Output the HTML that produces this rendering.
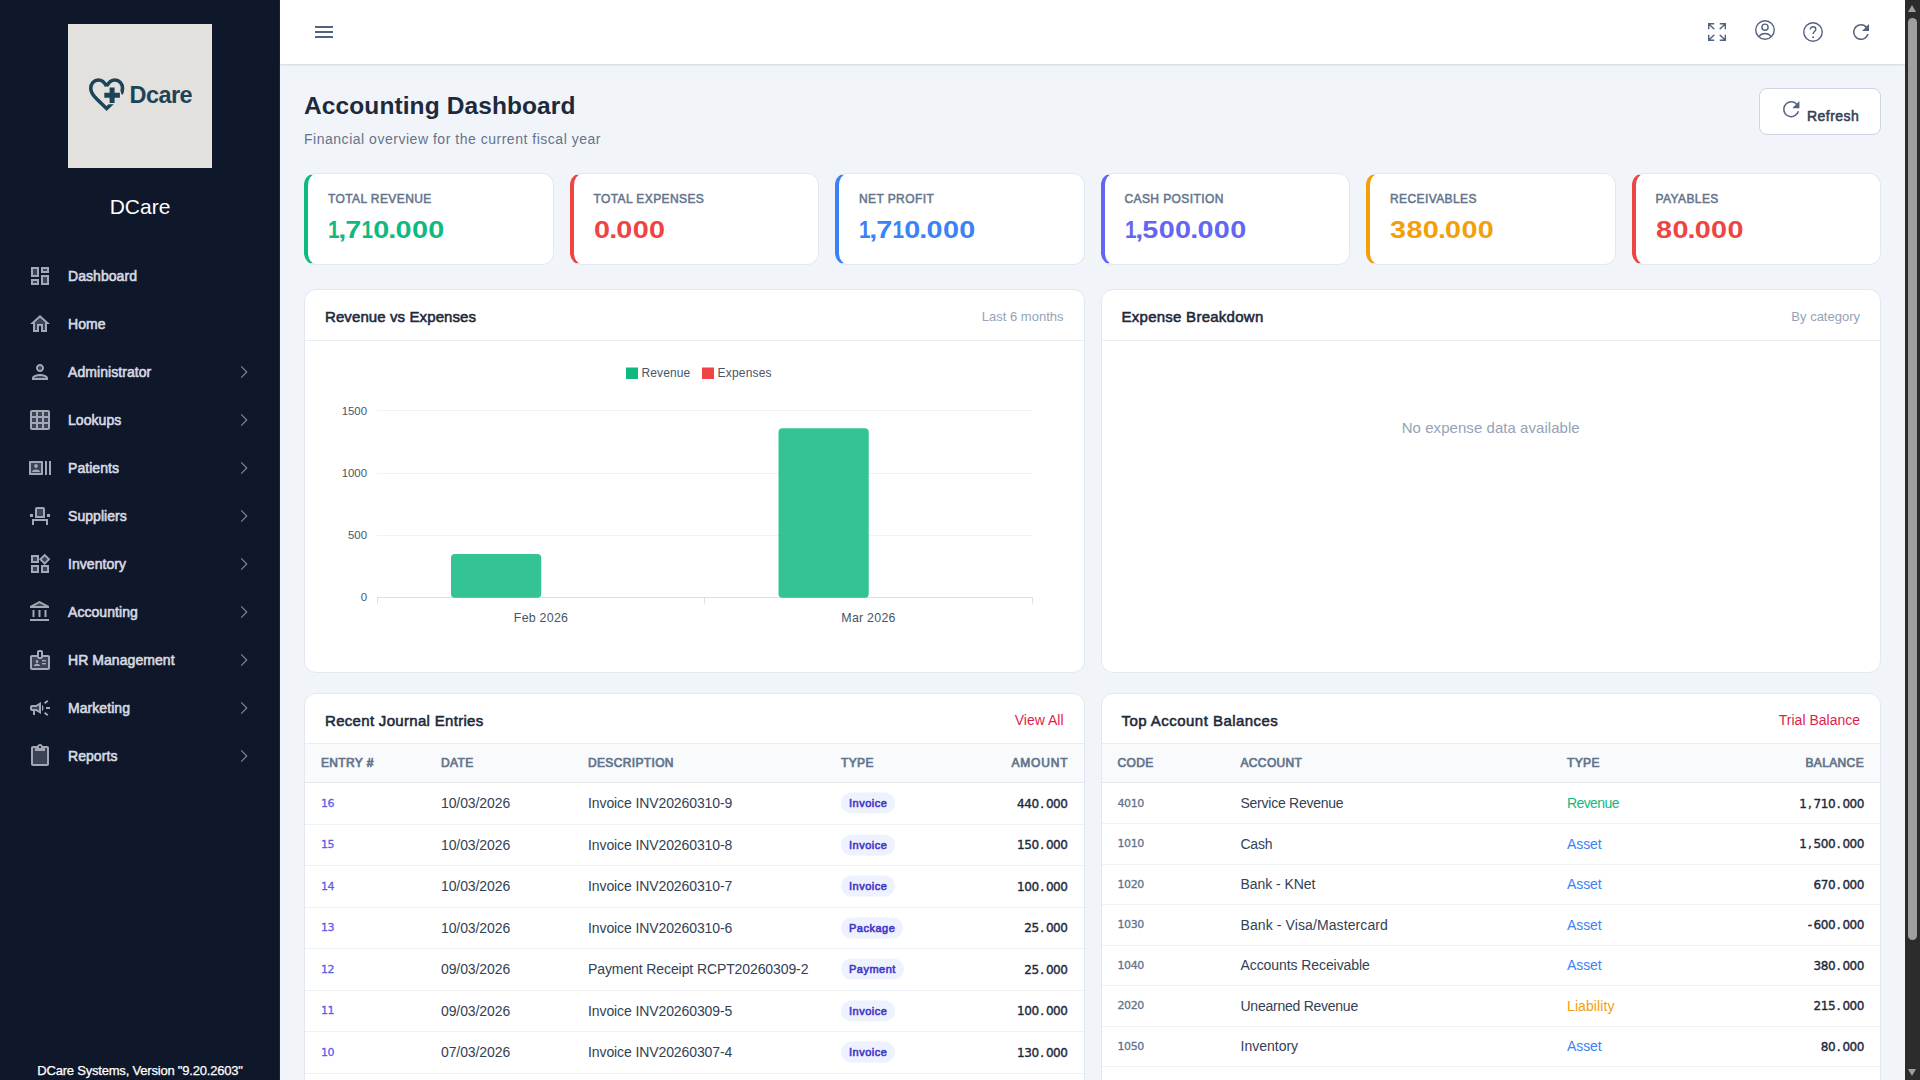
<!DOCTYPE html>
<html lang="en">
<head>
<meta charset="utf-8">
<title>Accounting Dashboard</title>
<style>
*{box-sizing:border-box;margin:0;padding:0}
html,body{width:1920px;height:1080px;overflow:hidden}
body{font-family:"Liberation Sans",sans-serif;background:#f1f5f9;color:#1e293b;position:relative}
#side{position:absolute;left:0;top:0;width:280px;height:1080px;background:#0f172a;border-right:1px solid #1c2539}
#logo{position:absolute;left:68px;top:24px;width:144px;height:144px;background:#e3e1dd}
#logo svg{position:absolute;left:0;top:0}
#brand{position:absolute;left:0;width:280px;top:193px;text-align:center;color:#fff;font-size:21px;line-height:28px}
.mi{position:absolute;left:0;width:280px;height:48px}
.mi svg.ic{position:absolute;left:28px;top:12px;width:24px;height:24px;fill:#a3a8b7}
.mi span{position:absolute;left:68px;top:0;line-height:48px;font-size:14px;font-weight:400;letter-spacing:.06px;color:#d6dae1;-webkit-text-stroke:.6px #d6dae1;white-space:nowrap}
.mi svg.ch{position:absolute;left:238px;top:18px;width:12px;height:12px;fill:none;stroke:#7f8aa0;stroke-width:1.1}
#ver{position:absolute;left:0;width:280px;top:1063px;text-align:center;color:#fff;-webkit-text-stroke:.25px #fff;font-size:13px;letter-spacing:-.2px;line-height:16px;white-space:nowrap}
#top{position:absolute;left:280px;top:0;width:1625px;height:64px;background:#fff;box-shadow:0 1px 2px rgba(15,23,42,.14)}
#top svg{position:absolute;width:24px;height:24px;top:20px}
#sb{position:absolute;left:1905px;top:0;width:15px;height:1080px;background:#2c2c2c}
#sb i{position:absolute;left:3px;width:9px;top:18px;height:922px;border-radius:4.5px;background:#9f9f9f}
#sb b{position:absolute;left:2.800px;width:0;height:0;border-left:4.900px solid transparent;border-right:4.900px solid transparent}
#sb b.u{top:5px;border-bottom:7px solid #9f9f9f}
#sb b.d{top:1069px;border-top:7px solid #9f9f9f}
#h1{position:absolute;left:304px;top:90.5px;font-size:24.5px;font-weight:700;letter-spacing:.1px;line-height:30px;color:#1e293b;white-space:nowrap}
#sub{position:absolute;left:304px;top:130px;font-size:14px;letter-spacing:.52px;line-height:18px;color:#64748b;white-space:nowrap}
#ref{position:absolute;left:1759px;top:88px;width:122px;height:47px;background:#fff;border:1px solid #cdd5e0;border-radius:8px}
#ref svg{position:absolute;left:19.300px;top:7.900px;width:24.500px;height:24.500px;fill:#53627e}
#ref span{position:absolute;left:47px;top:17px;font-size:14px;font-weight:400;letter-spacing:.45px;line-height:20px;color:#334155;-webkit-text-stroke:.55px #334155}
.sc{position:absolute;top:173px;width:249.5px;height:92px;background:#fff;border:1px solid #e2e8f0;border-left-width:4px;border-radius:12px}
.sc .l{position:absolute;left:20px;top:16px;font-size:12px;font-weight:400;letter-spacing:.4px;line-height:18px;color:#64748b;-webkit-text-stroke:.5px #64748b;white-space:nowrap}
.sc .v{position:absolute;left:20px;top:40px;font-size:24px;font-weight:700;line-height:32px;white-space:nowrap;letter-spacing:.3px;transform:scaleX(1.2);transform-origin:0 0}
.sc .v i{font-style:normal;display:inline-block;width:9.500px;transform:scaleX(.72);transform-origin:0 50%}
.sc .v u{text-decoration:none;margin:0 -1px}
.pn{position:absolute;background:#fff;border:1px solid #e2e8f0;border-radius:12px;overflow:hidden}
.pn .hd{position:absolute;left:0;top:0;right:0;height:50px;border-bottom:1px solid #e8edf3}
.pn .hd b{position:absolute;left:20px;top:16px;font-size:15px;line-height:22px;font-weight:400;color:#1e293b;-webkit-text-stroke:.55px #1e293b;white-space:nowrap}
.pn .hd em{position:absolute;right:20px;top:16px;font-style:normal;font-size:13px;line-height:20px;color:#94a3b8;white-space:nowrap}
.pn .hd a{position:absolute;right:20px;top:16px;font-size:14px;line-height:20px;color:#e11d48;white-space:nowrap;text-decoration:none}
.th{position:absolute;left:0;right:0;top:50px;height:39px;background:#f8fafc;border-bottom:1px solid #e2e8f0}
.th span{position:absolute;top:10px;font-size:12px;font-weight:400;letter-spacing:.35px;line-height:18px;color:#64748b;-webkit-text-stroke:.7px #64748b;white-space:nowrap}
.tr{position:absolute;left:0;right:0;border-bottom:1px solid #eef2f6}
.tr span{position:absolute;top:50%;transform:translateY(-50%);white-space:nowrap;font-size:14px;letter-spacing:-.1px;line-height:20px;color:#334155}
.tr .m{font-family:"DejaVu Sans","DejaVu Sans Mono",monospace;letter-spacing:-.4px;margin-top:.4px}
.tr .m u{text-decoration:none;display:inline-block;width:7.2px;text-align:center;letter-spacing:0}
.tr .no{font-size:11px;color:#5b5fe8;-webkit-text-stroke:.3px #5b5fe8}
.tr .cd{font-size:11px;color:#64748b;-webkit-text-stroke:.3px #64748b}
.tr .am{font-size:12px;font-weight:400;letter-spacing:-.43px;color:#1e293b;-webkit-text-stroke:.38px #1e293b;right:16px}
.tr .bg{height:21px;line-height:21px;padding:0 8px;border-radius:10.5px;background:#eef2ff;color:#4338ca;font-size:11px;font-weight:400;letter-spacing:.5px;-webkit-text-stroke:.6px #4338ca}
</style>
</head>
<body>
<aside id="side">
<div id="logo"><svg width="144" height="144" viewBox="0 0 144 144"><g fill="none" stroke="#1d4358" stroke-width="3.6" stroke-linejoin="miter"><path d="M38.6 62.3C36.6 58.4 33.6 56 30.4 56C26 56 22.8 59.6 22.8 64.4C22.8 69 25.8 72.2 29 75.300L38.600 84.600L45.200 78.200"/><path d="M38.6 62.3C40.600 58.400 43.600 56 46.900 56C51.300 56 54.500 59.600 54.500 64.400C54.500 66.400 54 68.200 53.100 69.900"/></g><path d="M41.6 63.400h5v5.300h5.300v5h-5.300v5.300h-5v-5.300h-5.300v-5h5.300z" fill="#1d4358" stroke="#e3e1dd" stroke-width="2.4" paint-order="stroke"/><text x="61.5" y="78.700" font-family="Liberation Sans,sans-serif" font-weight="700" font-size="23.500" letter-spacing="-.55" fill="#1d4358">Dcare</text></svg></div>
<div id="brand">DCare</div>
<div class="mi" style="top:252px"><svg class="ic" viewBox="0 0 24 24"><path opacity=".3" d="M5 5h4v6H5zm10 8h4v6h-4zM5 17h4v2H5zM15 5h4v2h-4z"/><path d="M3 13h8V3H3v10zm2-8h4v6H5V5zm8 16h8V11h-8v10zm2-8h4v6h-4v-6zM13 3v6h8V3h-8zm6 4h-4V5h4v2zM3 21h8v-6H3v6zm2-4h4v2H5v-2z"/></svg><span>Dashboard</span></div>
<div class="mi" style="top:300px"><svg class="ic" viewBox="0 0 24 24"><path d="M12 3L2 12h3v8h6v-6h2v6h6v-8h3L12 3zm5 15h-2v-6H9v6H7v-7.81l5-4.5 5 4.5V18z"/><path opacity=".3" d="M7 10.19V18h2v-6h6v6h2v-7.81l-5-4.5z"/></svg><span>Home</span></div>
<div class="mi" style="top:348px"><svg class="ic" viewBox="0 0 24 24"><path opacity=".3" d="M12 16c-2.69 0-5.77 1.28-6 2h12c-.2-.71-3.3-2-6-2z"/><circle cx="12" cy="8" r="2" opacity=".3"/><path d="M12 14c-2.67 0-8 1.34-8 4v2h16v-2c0-2.66-5.33-4-8-4zm-6 4c.22-.72 3.31-2 6-2 2.7 0 5.8 1.29 6 2H6zm6-6c2.21 0 4-1.790 4-4s-1.790-4-4-4-4 1.790-4 4 1.790 4 4 4zm0-6c1.100 0 2 .9 2 2s-.9 2-2 2-2-.9-2-2 .9-2 2-2z"/></svg><span>Administrator</span><svg class="ch" viewBox="0 0 12 12"><path d="M3.200.4L8.800 6L3.200 11.600"/></svg></div>
<div class="mi" style="top:396px"><svg class="ic" viewBox="0 0 24 24"><path opacity=".3" d="M10 10h4v4h-4zm0 6h4v4h-4zM4 4h4v4H4zm0 6h4v4H4zm0 6h4v4H4zM16 4h4v4h-4zm0 6h4v4h-4zm0 6h4v4h-4zM10 4h4v4h-4z"/><path d="M20 2H4c-1.100 0-2 .9-2 2v16c0 1.100.9 2 2 2h16c1.100 0 2-.9 2-2V4c0-1.100-.9-2-2-2zM8 20H4v-4h4v4zm0-6H4v-4h4v4zm0-6H4V4h4v4zm6 12h-4v-4h4v4zm0-6h-4v-4h4v4zm0-6h-4V4h4v4zm6 12h-4v-4h4v4zm0-6h-4v-4h4v4zm0-6h-4V4h4v4z"/></svg><span>Lookups</span><svg class="ch" viewBox="0 0 12 12"><path d="M3.200.4L8.800 6L3.200 11.600"/></svg></div>
<div class="mi" style="top:444px"><svg class="ic" viewBox="0 0 24 24"><path opacity=".3" d="M13 7H3v10h10V7zM8 8c1.070 0 1.950.87 1.950 1.950 0 1.070-.87 1.950-1.950 1.950s-1.950-.87-1.950-1.950S6.930 8 8 8zm3.890 8H4.110v-.65c0-1.300 2.590-1.950 3.890-1.950s3.890.65 3.890 1.950V16z"/><path d="M21 5h2v14h-2zm-4 0h2v14h-2zm-3 14c.55 0 1-.45 1-1V6c0-.55-.45-1-1-1H2c-.55 0-1 .45-1 1v12c0 .55.45 1 1 1h12zM3 7h10v10H3V7z"/><circle cx="8" cy="9.940" r="1.950"/><path d="M8 13.400c-1.300 0-3.890.65-3.890 1.950V16h7.780v-.65c0-1.300-2.590-1.950-3.890-1.950z"/></svg><span>Patients</span><svg class="ch" viewBox="0 0 12 12"><path d="M3.200.4L8.800 6L3.200 11.600"/></svg></div>
<div class="mi" style="top:492px"><svg class="ic" viewBox="0 0 24 24"><path opacity=".3" d="M9 5h6v7H9z"/><path d="M4 21h2v-4h12v4h2v-6H4zM17 5c0-1.100-.9-2-2-2H9c-1.100 0-2 .9-2 2v9h10V5zm-2 7H9V5h6v7zm4-2h3v3h-3zM2 10h3v3H2z"/></svg><span>Suppliers</span><svg class="ch" viewBox="0 0 12 12"><path d="M3.200.4L8.800 6L3.200 11.600"/></svg></div>
<div class="mi" style="top:540px"><svg class="ic" viewBox="0 0 24 24"><path opacity=".3" d="M5 5h4v4H5zm10 10h4v4h-4zM5 15h4v4H5zM16.660 4.520l-2.830 2.820 2.830 2.830 2.830-2.830z"/><path d="M16.660 1.690L11 7.340 16.660 13l5.660-5.660-5.660-5.650zm-2.830 5.650l2.830-2.830 2.830 2.830-2.830 2.830-2.830-2.830zM3 3v8h8V3H3zm6 6H5V5h4v4zM3 21h8v-8H3v8zm2-6h4v4H5v-4zm8-2v8h8v-8h-8zm6 6h-4v-4h4v4z"/></svg><span>Inventory</span><svg class="ch" viewBox="0 0 12 12"><path d="M3.200.4L8.800 6L3.200 11.600"/></svg></div>
<div class="mi" style="top:588px"><svg class="ic" viewBox="0 0 24 24"><path opacity=".3" d="M6.290 6l5.210-2.740L16.710 6z"/><path d="M6.500 10h-2v7h2v-7zm6 0h-2v7h2v-7zm8.500 9H2v2h19v-2zm-2.500-9h-2v7h2v-7zm-7-9L2 6v2h19V6l-9.500-5zM6.290 6l5.210-2.740L16.710 6H6.290z"/></svg><span>Accounting</span><svg class="ch" viewBox="0 0 12 12"><path d="M3.200.4L8.800 6L3.200 11.600"/></svg></div>
<div class="mi" style="top:636px"><svg class="ic" viewBox="0 0 24 24"><path opacity=".3" d="M13 11h-2c-1.100 0-2-.9-2-2H4v11h16V9h-5c0 1.100-.9 2-2 2zm-4 1c.83 0 1.500.67 1.500 1.500S9.830 15 9 15s-1.500-.67-1.500-1.500S8.170 12 9 12zm3 6H6v-.43c0-.6.36-1.150.92-1.390.64-.28 1.340-.43 2.080-.43s1.440.15 2.080.43c.55.24.92.78.92 1.390V18zm6-1.500h-4V15h4v1.500zm0-3h-4V12h4v1.500z"/><path d="M14 13.500h4V12h-4v1.500zm0 3h4V15h-4v1.500zM20 7h-5V4c0-1.100-.9-2-2-2h-2c-1.100 0-2 .9-2 2v3H4c-1.100 0-2 .9-2 2v11c0 1.100.9 2 2 2h16c1.100 0 2-.9 2-2V9c0-1.100-.9-2-2-2zm-9-3h2v5h-2V4zm9 16H4V9h5c0 1.100.9 2 2 2h2c1.100 0 2-.9 2-2h5v11zM9 15c.83 0 1.500-.67 1.500-1.500S9.830 12 9 12s-1.500.67-1.500 1.500S8.170 15 9 15zm2.080 1.180c-.64-.28-1.340-.43-2.080-.43s-1.440.15-2.080.43c-.56.24-.92.78-.92 1.390V18h6v-.43c0-.61-.36-1.150-.92-1.390z"/></svg><span>HR Management</span><svg class="ch" viewBox="0 0 12 12"><path d="M3.200.4L8.800 6L3.200 11.600"/></svg></div>
<div class="mi" style="top:684px"><svg class="ic" viewBox="0 0 24 24"><path opacity=".3" d="M9.030 10.710L11 9.530v4.940l-1.970-1.180-.48-.29H4v-2h4.550z"/><path d="M18 11v2h4v-2h-4zm-2 6.610c.96.71 2.210 1.650 3.200 2.390.4-.53.8-1.070 1.200-1.600-.99-.74-2.240-1.680-3.200-2.400-.4.54-.8 1.080-1.200 1.610zM20.400 5.600c-.4-.53-.8-1.070-1.200-1.600-.99.74-2.240 1.680-3.200 2.400.4.53.8 1.070 1.200 1.600.96-.72 2.210-1.650 3.200-2.400zM4 9c-1.100 0-2 .9-2 2v2c0 1.100.9 2 2 2h1v4h2v-4h1l5 3V6L8 9H4zm5.030 1.710L11 9.530v4.940l-1.970-1.180-.48-.29H4v-2h4.550l.48-.29zM15.500 12c0-1.330-.58-2.530-1.500-3.350v6.690c.92-.81 1.500-2.010 1.500-3.340z"/></svg><span>Marketing</span><svg class="ch" viewBox="0 0 12 12"><path d="M3.200.4L8.800 6L3.200 11.600"/></svg></div>
<div class="mi" style="top:732px"><svg class="ic" viewBox="0 0 24 24"><path opacity=".3" d="M17 7H7V4H5v16h14V4h-2z"/><path d="M19 2h-4.180C14.400.84 13.300 0 12 0S9.600.84 9.180 2H5c-1.100 0-2 .9-2 2v16c0 1.100.9 2 2 2h14c1.100 0 2-.9 2-2V4c0-1.100-.9-2-2-2zm-7 0c.55 0 1 .45 1 1s-.45 1-1 1-1-.45-1-1 .45-1 1-1zm7 18H5V4h2v3h10V4h2v16z"/></svg><span>Reports</span><svg class="ch" viewBox="0 0 12 12"><path d="M3.200.4L8.800 6L3.200 11.600"/></svg></div>
<div id="ver">DCare Systems, Version "9.20.2603"</div>
</aside>
<header id="top"><svg style="left:32px" viewBox="0 0 24 24" fill="#53627e"><path d="M3 18h18v-2H3v2zm0-5h18v-2H3v2zm0-7v2h18V6H3z"/></svg><svg style="left:1425px" viewBox="0 0 24 24" fill="none" stroke="#53627e" stroke-width="1.400"><path d="M3.700 9.200V3.700h5.500M3.700 3.700l5.600 5.600M14.800 3.700h5.500v5.500M20.300 3.700l-5.600 5.600M3.700 14.800v5.500h5.500M3.700 20.300l5.600-5.600M20.300 14.800v5.500h-5.500M20.300 20.300l-5.600-5.600"/></svg><svg style="left:1473px;top:18px" viewBox="0 0 24 24" fill="none" stroke="#53627e" stroke-width="1.400"><circle cx="12" cy="12" r="9.250"/><circle cx="12" cy="9.200" r="3.100"/><path d="M5.800 18.600c1.500-2 3.700-3.100 6.200-3.100s4.700 1.100 6.200 3.100"/></svg><svg style="left:1521px" viewBox="0 0 24 24" fill="none" stroke="#53627e" stroke-width="1.400"><circle cx="12" cy="12" r="9.250"/><path d="M9.300 9.500c0-1.600 1.200-2.700 2.800-2.700s2.700 1 2.700 2.500c0 2.200-2.700 2.400-2.700 4.700"/><circle cx="12.100" cy="17.200" r=".95" fill="#53627e" stroke="none"/></svg><svg style="left:1569px" viewBox="0 0 24 24" fill="#53627e"><path d="M17.650 6.350A7.958 7.958 0 0 0 12 4a8 8 0 1 0 7.730 10h-1.580A6.500 6.500 0 1 1 12 5.500c1.800 0 3.400.74 4.570 1.930L13 11h7V4l-2.350 2.350z"/></svg></header>
<h1 id="h1">Accounting Dashboard</h1>
<p id="sub">Financial overview for the current fiscal year</p>
<div id="ref"><svg viewBox="0 0 24 24"><path d="M17.650 6.350A7.958 7.958 0 0 0 12 4a8 8 0 1 0 7.730 10h-1.580A6.500 6.500 0 1 1 12 5.500c1.800 0 3.400.74 4.570 1.930L13 11h7V4l-2.350 2.350z"/></svg><span>Refresh</span></div>
<div class="sc" style="left:304.0px;border-left-color:#10b981"><div class="l">TOTAL REVENUE</div><div class="v" style="color:#10b981"><i>1</i><u>,</u>7<i>1</i>0<u>.</u>000</div></div>
<div class="sc" style="left:569.5px;border-left-color:#ef4444"><div class="l">TOTAL EXPENSES</div><div class="v" style="color:#ef4444">0<u>.</u>000</div></div>
<div class="sc" style="left:835.0px;border-left-color:#3b82f6"><div class="l">NET PROFIT</div><div class="v" style="color:#3b82f6"><i>1</i><u>,</u>7<i>1</i>0<u>.</u>000</div></div>
<div class="sc" style="left:1100.5px;border-left-color:#6366f1"><div class="l">CASH POSITION</div><div class="v" style="color:#6366f1"><i>1</i><u>,</u>500<u>.</u>000</div></div>
<div class="sc" style="left:1366.0px;border-left-color:#f59e0b"><div class="l">RECEIVABLES</div><div class="v" style="color:#f59e0b">380<u>.</u>000</div></div>
<div class="sc" style="left:1631.5px;border-left-color:#ef4444"><div class="l">PAYABLES</div><div class="v" style="color:#ef4444">80<u>.</u>000</div></div>
<div class="pn" style="left:304px;top:289px;width:780.5px;height:384px"><div class="hd" style="height:51px"><b style="letter-spacing:.1px">Revenue vs Expenses</b><em style="top:17px">Last 6 months</em></div><svg style="position:absolute;left:0;top:51px" width="779" height="330" viewBox="305 341 779 330" font-family="Liberation Sans,sans-serif"><rect x="626" y="367.500" width="12" height="11.500" fill="#10b981"/><text x="641.500" y="377.300" font-size="12" fill="#475569" letter-spacing=".1">Revenue</text><rect x="702" y="367.500" width="12" height="11.500" fill="#ef4444"/><text x="717.500" y="377.300" font-size="12" fill="#475569" letter-spacing=".2">Expenses</text><g stroke="#f2f3f6" stroke-width="1"><path d="M377 410.500H1033M377 473.500H1033M377 535.500H1033"/></g><g stroke="#dcdfe5" stroke-width="1"><path d="M377 597.500H1033M377.500 597.500v6M704.500 597.500v6M1032.500 597.500v6"/></g><g font-size="11.400" fill="#475569" text-anchor="end"><text x="367" y="415">1500</text><text x="367" y="477">1000</text><text x="367" y="539">500</text><text x="367" y="601">0</text></g><rect x="451" y="554" width="90.250" height="43.700" rx="4" fill="rgba(16,185,129,.85)"/><rect x="778.500" y="428.300" width="90.250" height="169.400" rx="4" fill="rgba(16,185,129,.85)"/><g font-size="12.400" fill="#475569" text-anchor="middle" letter-spacing=".25"><text x="541" y="622">Feb 2026</text><text x="868.500" y="622">Mar 2026</text></g></svg></div>
<div class="pn" style="left:1100.500px;top:289px;width:780.5px;height:384px"><div class="hd" style="height:51px"><b style="letter-spacing:.26px">Expense Breakdown</b><em style="top:17px">By category</em></div><div style="position:absolute;left:0;right:0;top:128px;text-align:center;font-size:15px;line-height:20px;color:#94a3b8;letter-spacing:.05px">No expense data available</div></div>
<div class="pn" style="left:304px;top:693px;width:780.5px;height:420px"><div class="hd"><b style="letter-spacing:.31px">Recent Journal Entries</b><a>View All</a></div><div class="th"><span style="left:16px">ENTRY #</span><span style="left:136px">DATE</span><span style="left:283px">DESCRIPTION</span><span style="left:536px">TYPE</span><span style="right:16px;letter-spacing:.8px;margin-right:-.8px">AMOUNT</span></div><div class="tr" style="top:89.0px;height:41.5px"><span class="m no" style="left:16px">16</span><span style="left:136px">10/03/2026</span><span style="left:283px">Invoice INV20260310-9</span><span class="bg" style="left:536px">Invoice</span><span class="m am">440<u>.</u>000</span></div><div class="tr" style="top:130.5px;height:41.5px"><span class="m no" style="left:16px">15</span><span style="left:136px">10/03/2026</span><span style="left:283px">Invoice INV20260310-8</span><span class="bg" style="left:536px">Invoice</span><span class="m am">150<u>.</u>000</span></div><div class="tr" style="top:172.0px;height:41.5px"><span class="m no" style="left:16px">14</span><span style="left:136px">10/03/2026</span><span style="left:283px">Invoice INV20260310-7</span><span class="bg" style="left:536px">Invoice</span><span class="m am">100<u>.</u>000</span></div><div class="tr" style="top:213.5px;height:41.5px"><span class="m no" style="left:16px">13</span><span style="left:136px">10/03/2026</span><span style="left:283px">Invoice INV20260310-6</span><span class="bg" style="left:536px">Package</span><span class="m am">25<u>.</u>000</span></div><div class="tr" style="top:255.0px;height:41.5px"><span class="m no" style="left:16px">12</span><span style="left:136px">09/03/2026</span><span style="left:283px">Payment Receipt RCPT20260309-2</span><span class="bg" style="left:536px">Payment</span><span class="m am">25<u>.</u>000</span></div><div class="tr" style="top:296.5px;height:41.5px"><span class="m no" style="left:16px">11</span><span style="left:136px">09/03/2026</span><span style="left:283px">Invoice INV20260309-5</span><span class="bg" style="left:536px">Invoice</span><span class="m am">100<u>.</u>000</span></div><div class="tr" style="top:338.0px;height:41.5px"><span class="m no" style="left:16px">10</span><span style="left:136px">07/03/2026</span><span style="left:283px">Invoice INV20260307-4</span><span class="bg" style="left:536px">Invoice</span><span class="m am">130<u>.</u>000</span></div><div class="tr" style="top:379.5px;height:41.5px"><span class="m no" style="left:16px">9</span><span style="left:136px">07/03/2026</span><span style="left:283px">Invoice INV20260307-3</span><span class="bg" style="left:536px">Invoice</span><span class="m am">100<u>.</u>000</span></div></div>
<div class="pn" style="left:1100.500px;top:693px;width:780.5px;height:420px"><div class="hd"><b style="letter-spacing:.46px">Top Account Balances</b><a>Trial Balance</a></div><div class="th"><span style="left:16px">CODE</span><span style="left:139px">ACCOUNT</span><span style="left:465.500px">TYPE</span><span style="right:16px">BALANCE</span></div><div class="tr" style="top:89.5px;height:40.5px"><span class="m cd" style="left:16px">4010</span><span style="left:139px;letter-spacing:-0.25px">Service Revenue</span><span style="left:465.500px;color:#10b981;letter-spacing:-0.6px">Revenue</span><span class="m am">1<u>,</u>710<u>.</u>000</span></div><div class="tr" style="top:130.0px;height:40.5px"><span class="m cd" style="left:16px">1010</span><span style="left:139px;letter-spacing:-0.25px">Cash</span><span style="left:465.500px;color:#3b82f6;letter-spacing:-0.1px">Asset</span><span class="m am">1<u>,</u>500<u>.</u>000</span></div><div class="tr" style="top:170.5px;height:40.5px"><span class="m cd" style="left:16px">1020</span><span style="left:139px;letter-spacing:-0.05px">Bank - KNet</span><span style="left:465.500px;color:#3b82f6;letter-spacing:-0.1px">Asset</span><span class="m am">670<u>.</u>000</span></div><div class="tr" style="top:211.0px;height:40.5px"><span class="m cd" style="left:16px">1030</span><span style="left:139px;letter-spacing:0.1px">Bank - Visa/Mastercard</span><span style="left:465.500px;color:#3b82f6;letter-spacing:-0.1px">Asset</span><span class="m am"><u>-</u>600<u>.</u>000</span></div><div class="tr" style="top:251.5px;height:40.5px"><span class="m cd" style="left:16px">1040</span><span style="left:139px;letter-spacing:-0.08px">Accounts Receivable</span><span style="left:465.500px;color:#3b82f6;letter-spacing:-0.1px">Asset</span><span class="m am">380<u>.</u>000</span></div><div class="tr" style="top:292.0px;height:40.5px"><span class="m cd" style="left:16px">2020</span><span style="left:139px;letter-spacing:-0.25px">Unearned Revenue</span><span style="left:465.500px;color:#f59e0b;letter-spacing:0.1px">Liability</span><span class="m am">215<u>.</u>000</span></div><div class="tr" style="top:332.5px;height:40.5px"><span class="m cd" style="left:16px">1050</span><span style="left:139px;letter-spacing:0px">Inventory</span><span style="left:465.500px;color:#3b82f6;letter-spacing:-0.1px">Asset</span><span class="m am">80<u>.</u>000</span></div><div class="tr" style="top:373.0px;height:40.5px"><span class="m cd" style="left:16px">2010</span><span style="left:139px;letter-spacing:-0.08px">Accounts Payable</span><span style="left:465.500px;color:#f59e0b;letter-spacing:0.1px">Liability</span><span class="m am">80<u>.</u>000</span></div></div>
<div id="sb"><b class="u"></b><i></i><b class="d"></b></div>
</body>
</html>
